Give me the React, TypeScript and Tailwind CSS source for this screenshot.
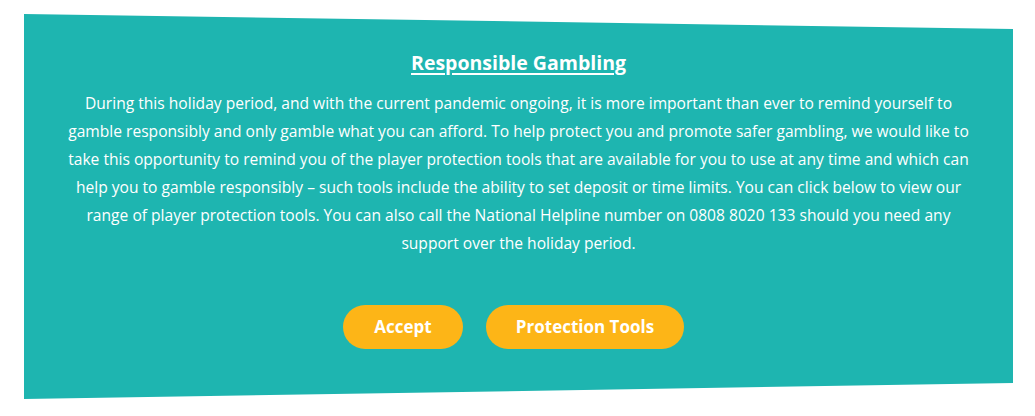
import React from 'react';

const lines = [
  'During this holiday period, and with the current pandemic ongoing, it is more important than ever to remind yourself to',
  'gamble responsibly and only gamble what you can afford. To help protect you and promote safer gambling, we would like to',
  'take this opportunity to remind you of the player protection tools that are available for you to use at any time and which can',
  'help you to gamble responsibly – such tools include the ability to set deposit or time limits. You can click below to view our',
  'range of player protection tools. You can also call the National Helpline number on 0808 8020 133 should you need any',
  'support over the holiday period.',
];

const App: React.FC = () => {
  return (
    <div className="w-[1035px] h-[416px] bg-white pt-[14px] pl-[24px]" style={{ fontFamily: '"Open Sans", Lato, sans-serif' }}>
      <div className="w-[989px] h-[385px] bg-[#1eb5b0] [clip-path:polygon(0_0,100%_15px,100%_calc(100%-16px),0_100%)] flex flex-col items-center text-white">
        <h2 className="mt-[37px] text-[19.5px] font-bold underline underline-offset-[3px] decoration-[2px] leading-[24px]">
          Responsible Gambling
        </h2>
        <p className="mt-[14px] text-center text-[15.6px] leading-[28px] whitespace-nowrap">
          {lines.map((l, i) => (
            <React.Fragment key={i}>
              {l}
              {i < lines.length - 1 && <br />}
            </React.Fragment>
          ))}
        </p>
        <div className="mt-[48px] mr-[10px] flex gap-[23px]">
          <button className="w-[120px] h-[44px] rounded-full bg-[#fdb517] text-white font-bold text-[17px]">Accept</button>
          <button className="w-[198px] h-[44px] rounded-full bg-[#fdb517] text-white font-bold text-[17px]">Protection Tools</button>
        </div>
      </div>
    </div>
  );
};

export default App;
